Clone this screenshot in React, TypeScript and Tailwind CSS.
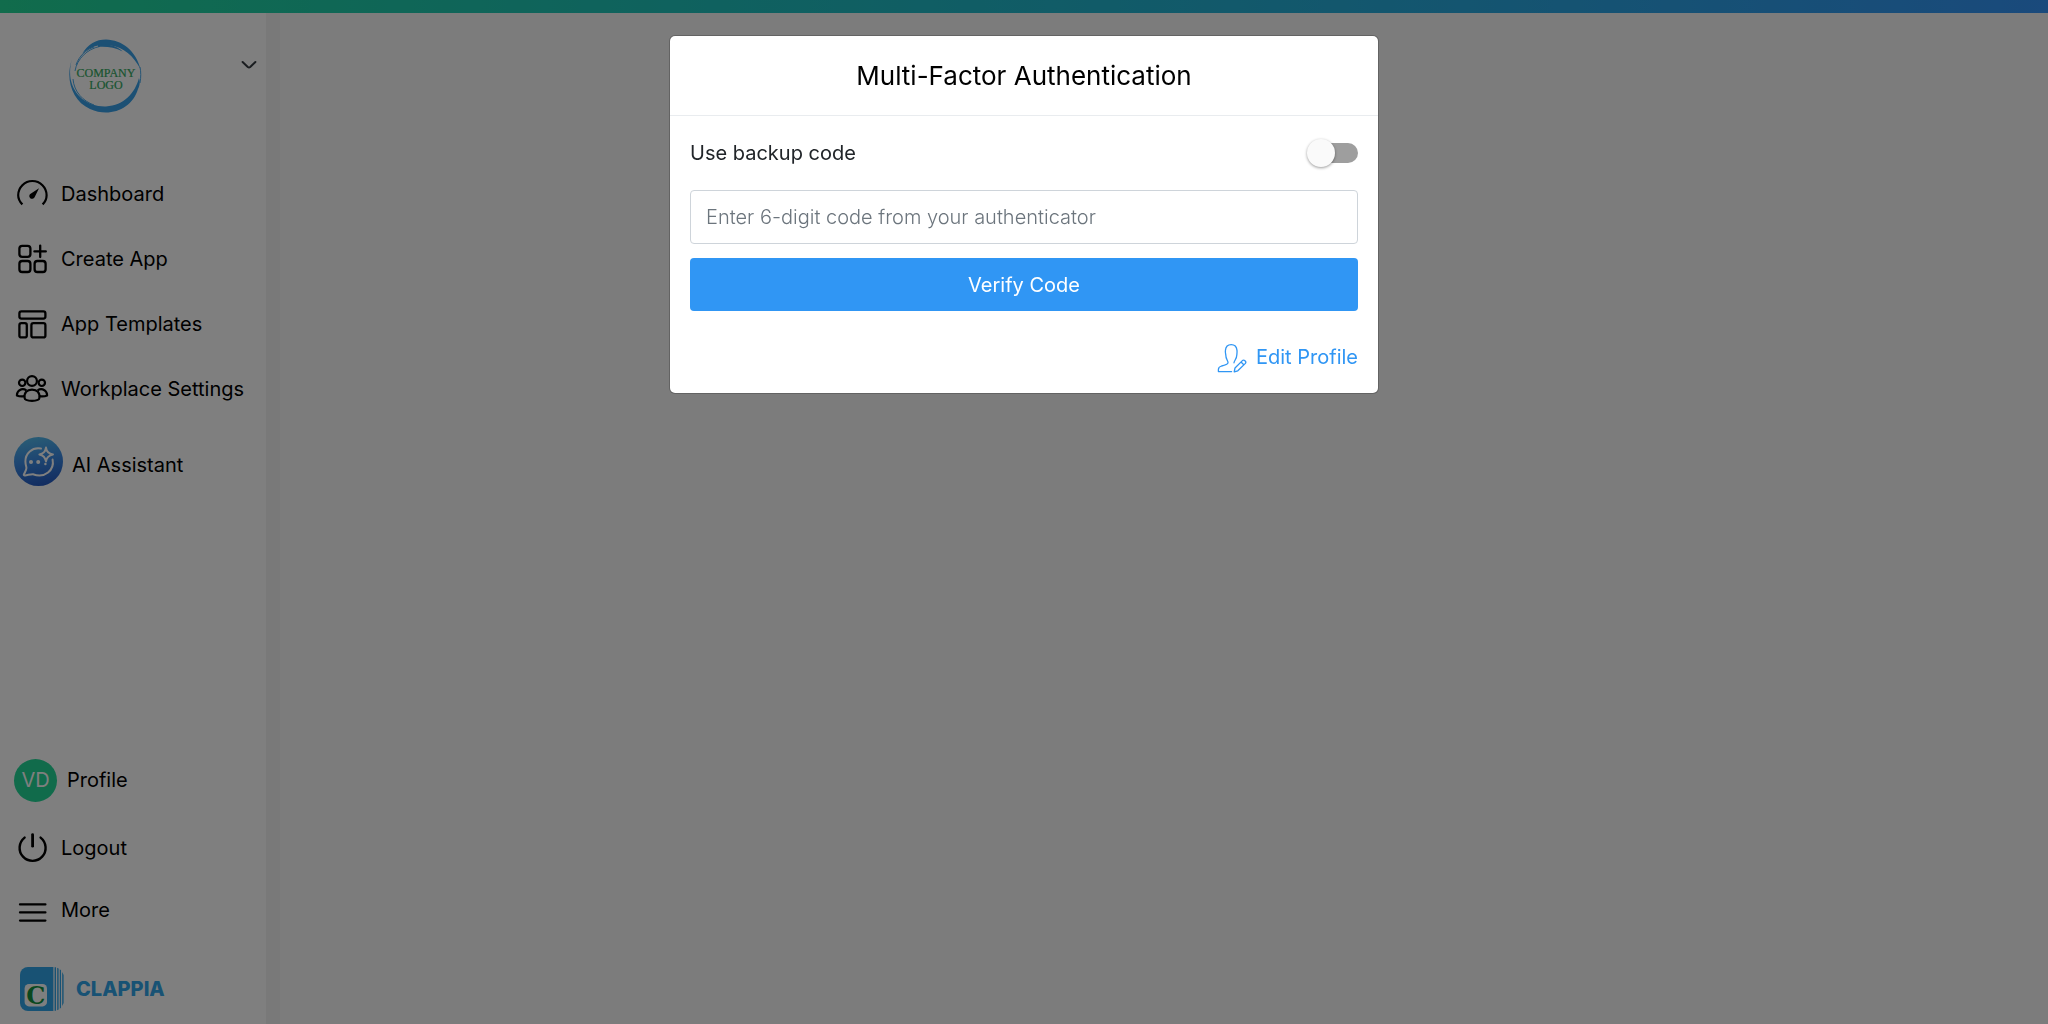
import { useState } from 'react'
import type { ReactNode } from 'react'

function GaugeIcon() {
  return (
    <svg width="32" height="32" viewBox="0 0 32 32" fill="none" stroke="#000" strokeWidth="2.2">
      <path d="M6.4 26.4 C3.6 23.6 2.2 20.8 2.2 17.2 A14.2 14.2 0 0 1 30.6 17.2 C30.6 20.8 29.4 23.6 26.6 26.4" />
      <path d="M23 10.2 L15 15.4 A2.8 2.8 0 1 0 18.6 19.2 Z" fill="#000" stroke="none" />
    </svg>
  )
}

function CreateIcon() {
  return (
    <svg width="32" height="32" viewBox="0 0 32 32" fill="none" stroke="#000" strokeWidth="2.3" strokeLinecap="round">
      <rect x="3.4" y="2.8" width="11" height="11" rx="2.8" />
      <rect x="3.4" y="18" width="11" height="11" rx="2.8" />
      <rect x="18.6" y="18" width="11" height="11" rx="2.8" />
      <path d="M24.2 2.6V14M18.4 8.4H29.8" />
    </svg>
  )
}

function TemplateIcon() {
  return (
    <svg width="32" height="32" viewBox="0 0 32 32" fill="none" stroke="#000" strokeWidth="2.3">
      <rect x="3.4" y="3.4" width="26" height="7.2" rx="2" />
      <rect x="3.4" y="15.2" width="7.4" height="14.2" rx="2" />
      <rect x="15.4" y="15.2" width="14" height="14.2" rx="2" />
    </svg>
  )
}

function PeopleIcon() {
  return (
    <svg width="34" height="32" viewBox="0 0 34 32" fill="none" stroke="#000" strokeWidth="2.2" strokeLinejoin="round">
      <circle cx="17" cy="8" r="4.9" />
      <circle cx="7.2" cy="9.8" r="3.2" />
      <circle cx="26.8" cy="9.8" r="3.2" />
      <path d="M9.6 25 C9 19.5 11.8 16.6 17 16.6 S25 19.5 24.4 25 C24.2 27.4 21 27.8 17 27.8 S9.8 27.4 9.6 25 Z" />
      <path d="M11.4 17.4 C9.6 16.2 6.6 16 4.6 17.2 C2.6 18.6 1.9 20.6 1.9 22.4 C4 23.4 6.6 23.6 9.2 23.2" />
      <path d="M22.6 17.4 C24.4 16.2 27.4 16 29.4 17.2 C31.4 18.6 32.1 20.6 32.1 22.4 C30 23.4 27.4 23.6 24.8 23.2" />
    </svg>
  )
}

function AssistantIcon() {
  return (
    <svg width="49" height="49" viewBox="0 0 49 49" fill="none">
      <defs>
        <linearGradient id="assistant" x1="0.4" y1="0" x2="0.6" y2="1">
          <stop offset="0" stopColor="#52b8ea" />
          <stop offset="0.45" stopColor="#3c8ce4" />
          <stop offset="1" stopColor="#2458c0" />
        </linearGradient>
      </defs>
      <circle cx="24.5" cy="24.5" r="24.5" fill="url(#assistant)" />
      <g stroke="#fff" strokeWidth="2" strokeLinecap="round" strokeLinejoin="round">
        <path d="M27 11.6 C18 10 11.2 16.6 11.4 24.6 C11.4 27 12 29 12.4 30.4 C12.6 32.6 11 35.4 9.8 37.4 C9.6 38.2 10.2 38.6 11 38.4 C14 38 17 37 19 37.2 C31 41.6 40.6 33 38.6 22.6" />
        <path d="M32 10.6 Q32.8 16.6 39 17.4 Q32.8 18.6 32 24.4 Q31 18.6 25.4 17.4 Q31 16.6 32 10.6 Z" />
      </g>
      <g fill="#fff">
        <circle cx="17" cy="25" r="2" />
        <circle cx="24.2" cy="25" r="2" />
        <circle cx="31.4" cy="27" r="1.2" />
      </g>
    </svg>
  )
}

function PowerIcon() {
  return (
    <svg width="32" height="32" viewBox="0 0 32 32" fill="none" stroke="#000" strokeWidth="2.4" strokeLinecap="round">
      <path d="M8.6 5.6 A13 13 0 1 0 24.6 5.6" />
      <path d="M16.6 2.6V14.2" strokeWidth="2.8" />
    </svg>
  )
}

function MenuIcon() {
  return (
    <svg width="32" height="32" viewBox="0 0 32 32" stroke="#000" strokeWidth="2.3" strokeLinecap="round">
      <path d="M4 7.4H29.4M4 15.4H29.4M4 23.6H29.4" />
    </svg>
  )
}

function CompanyLogo() {
  return (
    <svg width="74" height="76" viewBox="0 0 74 76" role="img" aria-label="Company logo">
      <path
        d="M14 15 C20 5 28 0.6 38 0.6 C54 1 68 12 72.4 30 C66 17 55 8 43 6.4 C31 4.6 21 8 14 15 Z"
        fill="#38a0e8"
      />
      <path
        d="M4 20 C-3 40 4 62 22 70 C42 79 64 70 70 50 C71.6 47 72.4 43 71 39 C67 54 56 66.6 38 67.4 C20 68 6 57 2.6 40 C1.6 33 2 27 4 20 Z"
        fill="#38a0e8"
      />
      <path d="M30 6 C40 4 50 7 54.6 12.4 C47 8.6 39 7.4 30 8 Z" fill="#38a0e8" />
      <g fill="none" stroke="#38a0e8" strokeWidth="0.9">
        <path d="M7 32 C9 20 19 10 32 7.4" />
        <path d="M8 26 C11 17 18 10.6 26 8" />
        <path d="M5 40 C6 53 15 62 26 66" />
        <path d="M72 28 C73 33 73 38 72 44" />
      </g>
      <g fill="#32a85e" stroke="#32a85e" strokeWidth="0.2" fontFamily="Liberation Serif, serif" fontSize="12" textAnchor="middle">
        <text x="38" y="38">COMPANY</text>
        <text x="38" y="50">LOGO</text>
      </g>
    </svg>
  )
}

function ClappiaMark() {
  return (
    <svg width="44" height="44" viewBox="0 0 44 44">
      <path d="M8 0H33.4V44H8A8 8 0 0 1 0 36V8A8 8 0 0 1 8 0Z" fill="#30a5e8" />
      <g fill="#30a5e8">
        <path d="M34.6 0.2H36V43.8H34.6Z" />
        <path d="M37.2 0.8L38.6 1.4V42.6L37.2 43.2Z" />
        <path d="M39.8 2.2L41 3.2V40.8L39.8 41.8Z" />
        <path d="M42.2 5L43.6 8V36L42.2 39Z" />
      </g>
      <rect x="4.6" y="17" width="22.4" height="22.4" rx="4.4" fill="#fff" />
      <text x="15.8" y="37" textAnchor="middle" fill="#12913f" fontFamily="DejaVu Serif, serif" fontWeight="700" fontSize="24">
        C
      </text>
    </svg>
  )
}

function EditProfileIcon() {
  return (
    <svg width="30" height="30" viewBox="0 0 30 30" fill="none" stroke="currentColor" strokeWidth="1.3" strokeLinejoin="round" strokeLinecap="round">
      <path d="M14.6 28.6H1.4V26.4 C1.4 24.4 2.6 23.6 4.6 23 C7.6 22.2 10.6 21.4 11 19.8 C11.4 18 8.6 16 8.8 12 C8.4 10.2 8.2 9 8.4 7.4 C8.8 3.4 11 1.6 14.2 1.6 S19.6 3.4 20 7.4 C20.2 9 20 10.2 19.8 12 C19.8 16 17 17.8 17 19.8" />
      <path d="M17.2 28.8L18 25L25.4 17.6 C26.4 16.8 27.4 17.2 28.2 18 C29 18.8 29 19.6 28.4 20.4L20.8 27.8L17.2 28.8ZM24 19L26.8 21.8" />
    </svg>
  )
}

const mainLinks = [
  { label: 'Dashboard', icon: <GaugeIcon /> },
  { label: 'Create App', icon: <CreateIcon /> },
  { label: 'App Templates', icon: <TemplateIcon /> },
  { label: 'Workplace Settings', icon: <PeopleIcon /> },
]

function SidebarLink({ label, icon }: { label: string; icon: ReactNode }) {
  return (
    <a href="#" className="flex h-[65px] items-center">
      <span className="flex w-[47px] justify-center pr-[11px]">{icon}</span>
      <span>{label}</span>
    </a>
  )
}

function Sidebar() {
  return (
    <aside className="flex w-[266px] shrink-0 flex-col bg-white pb-[13px] pl-[14px] text-[20px] leading-7 whitespace-nowrap text-black">
      <div className="flex items-start justify-between pt-[26px] pr-[9px] pl-[54px]">
        <CompanyLogo />
        <button type="button" aria-label="Switch workplace" className="pt-5">
          <svg width="16" height="12" viewBox="0 0 16 12" fill="none" stroke="#343a40" strokeWidth="2" strokeLinecap="round" strokeLinejoin="round">
            <path d="M1.6 3L6.8 8Q8 9 9.2 8L14.4 3" />
          </svg>
        </button>
      </div>
      <nav className="pt-[46px]">
        {mainLinks.map((link) => (
          <SidebarLink key={link.label} label={link.label} icon={link.icon} />
        ))}
        <a href="#" className="flex h-20 items-center gap-[9px]">
          <AssistantIcon />
          <span className="pt-2">AI Assistant</span>
        </a>
      </nav>
      <div className="mt-auto">
        <a href="#" className="flex h-[70px] items-center gap-[10px]">
          <span className="flex size-[43px] items-center justify-center rounded-full bg-[#22d696] text-white">VD</span>
          <span>Profile</span>
        </a>
        <SidebarLink label="Logout" icon={<PowerIcon />} />
        <a href="#" className="flex h-[65px] items-center">
          <span className="flex w-[47px] justify-center pr-[11px]">
            <MenuIcon />
          </span>
          <span className="pb-[6px]">More</span>
        </a>
        <a href="#" className="flex items-center gap-3 pt-[22px] pl-[6px]">
          <ClappiaMark />
          <span className="font-extrabold text-[#30a5e8]">CLAPPIA</span>
        </a>
      </div>
    </aside>
  )
}

function MfaDialog() {
  const [code, setCode] = useState('')
  const [useBackup, setUseBackup] = useState(false)

  return (
    <div role="dialog" aria-modal="true" aria-labelledby="mfa-title" className="w-full max-w-[710px] rounded-md border border-black/20 bg-white bg-clip-padding">
      <div className="flex h-20 items-center justify-center border-b border-[#e9ecef]">
        <h1 id="mfa-title" className="text-[26px] leading-9 text-black">Multi-Factor Authentication</h1>
      </div>
      <form onSubmit={(e) => e.preventDefault()} className="px-5 pt-[23px] pb-5 text-[20px] leading-7">
        <div className="flex items-center justify-between">
          <label htmlFor="backup" className="text-[#212529]">Use backup code</label>
          <input
            id="backup"
            type="checkbox"
            checked={useBackup}
            onChange={(e) => setUseBackup(e.target.checked)}
            className="relative h-5 w-12 appearance-none rounded-full bg-[#9e9e9e] before:absolute before:-top-1 before:-left-[3px] before:size-7 before:rounded-full before:bg-[#fafafa] before:shadow-[0_1px_3px_rgba(0,0,0,0.4)] checked:before:left-[23px]"
          />
        </div>
        <input
          type="text"
          aria-label="Authentication code"
          value={code}
          onChange={(e) => setCode(e.target.value)}
          placeholder="Enter 6-digit code from your authenticator"
          className="mt-[23px] block h-[54px] w-full rounded border border-[#ced4da] px-[15px] font-light text-[#495057] outline-none placeholder:text-[#6c757d]"
        />
        <button type="submit" className="mt-[14px] block h-[53px] w-full rounded bg-[#3096f4] text-white">
          Verify Code
        </button>
        <div className="flex justify-end pt-8">
          <a href="#" className="flex items-start gap-[9px] text-[#3096f4]">
            <EditProfileIcon />
            <span>Edit Profile</span>
          </a>
        </div>
      </form>
    </div>
  )
}

export default function App() {
  return (
    <div className="flex min-h-screen flex-col font-['Inter',sans-serif]">
      <header className="h-[13px] bg-linear-to-r from-[#22d898] to-[#3494f8]" />
      <div className="flex grow">
        <Sidebar />
        <main className="grow border-l-[14px] border-[#f3f3f3] bg-[#f8f8f8]" />
      </div>
      <div className="fixed inset-0 flex items-start justify-center bg-black/50 px-4 pt-[35px]">
        <MfaDialog />
      </div>
    </div>
  )
}
